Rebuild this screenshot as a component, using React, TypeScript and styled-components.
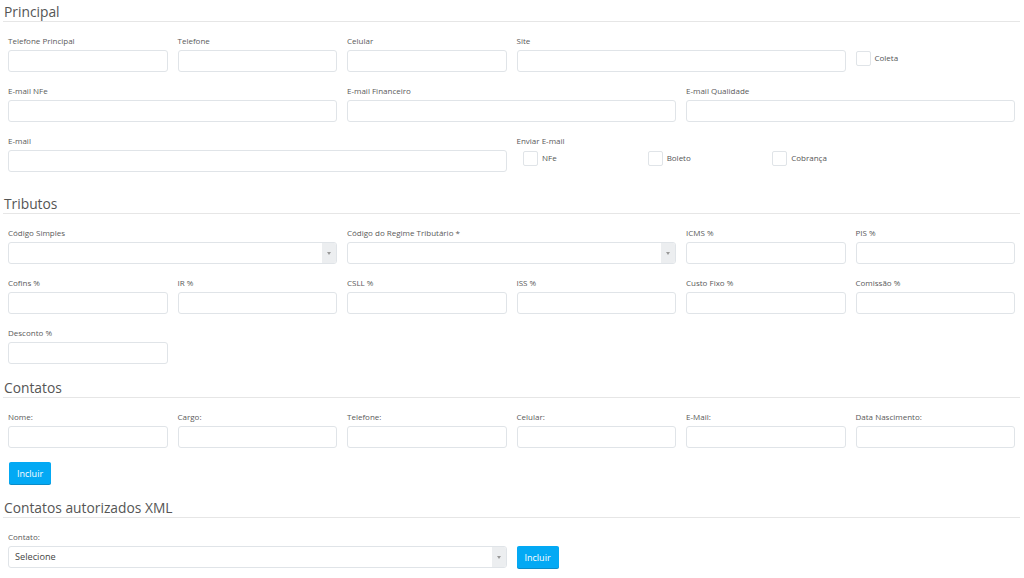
import React from 'react';
import styled, { createGlobalStyle } from 'styled-components';

const GlobalStyle = createGlobalStyle`
  html, body {
    margin: 0;
    padding: 0;
    background: #ffffff;
    font-family: "Open Sans", "Liberation Sans", sans-serif;
    color: #555;
  }
  * {
    box-sizing: border-box;
  }
`;

const Page = styled.div`
  width: 1024px;
  padding: 0 4px 0 3px;
`;

// margin-top collapses with the 10px bottom margin of the row above
const SectionTitle = styled.h3<{ $first?: boolean }>`
  margin: ${p => (p.$first ? '0' : '12px')} 0 0 0;
  padding: 0 0 0 1px;
  height: 22px;
  font-size: 13.8px;
  line-height: 23px;
  font-weight: 400;
  color: #555;
  border-bottom: 1px solid #e6e6e6;
`;

const Rows = styled.div`
  padding-top: 10px;
`;

const Row = styled.div`
  display: grid;
  grid-template-columns: repeat(6, 1fr);
  margin-bottom: 10px;
`;

const Col = styled.div<{ $span?: number }>`
  grid-column: span ${p => p.$span || 1};
  padding: 0 5px;
  min-width: 0;
`;

const Label = styled.label`
  display: block;
  height: 18px;
  font-size: 8px;
  line-height: 18px;
  color: #5a5a5a;
  white-space: nowrap;
`;

const Input = styled.input`
  display: block;
  width: 100%;
  height: 22px;
  margin: 0;
  padding: 0 6px;
  border: 1px solid #e0e4e8;
  border-radius: 3px;
  background: #fff;
  font-family: inherit;
  font-size: 9px;
  outline: none;
`;

const SelectBox = styled.div`
  display: flex;
  height: 22px;
  border: 1px solid #e0e4e8;
  border-radius: 3px;
  overflow: hidden;
  background: #fff;
`;

const SelectValue = styled.div`
  flex: 1;
  padding: 0 6px;
  font-size: 9.2px;
  line-height: 20px;
  color: #444;
`;

const SelectArrow = styled.div`
  width: 14px;
  background: #eceef0;
  display: flex;
  align-items: center;
  justify-content: center;

  &::after {
    content: '';
    width: 0;
    height: 0;
    border-left: 2.5px solid transparent;
    border-right: 2.5px solid transparent;
    border-top: 3px solid #999;
  }
`;

const CheckGroup = styled.div`
  display: grid;
  grid-template-columns: repeat(4, 1fr);
  height: 30px;
`;

const CheckItem = styled.label<{ $pad?: number }>`
  display: flex;
  align-items: center;
  gap: 3px;
  height: 16px;
  margin-top: 0;
  padding-left: ${p => p.$pad ?? 6.5}px;
  font-size: 8px;
  line-height: 12px;
  color: #555;
  white-space: nowrap;
`;

const Box = styled.span`
  display: inline-block;
  width: 15px;
  height: 15px;
  border: 1px solid #e0e4e8;
  border-radius: 2px;
  background: #fff;
  margin-right: 1px;
`;

const Button = styled.button`
  display: block;
  height: 22px;
  padding: 0 8px;
  margin: 0;
  border: none;
  border-radius: 2px;
  background: #03a9f4;
  box-shadow: 0 1px 0 #0a8cc8;
  color: #fff;
  font-family: inherit;
  font-size: 9px;
  cursor: pointer;
`;

const IncluirBlock = styled.div`
  padding: 4px 5px 0 6px;
  margin-bottom: 10px;
`;

const Select: React.FC<{ value?: string }> = ({ value }) => (
  <SelectBox>
    <SelectValue>{value}</SelectValue>
    <SelectArrow />
  </SelectBox>
);

const Field: React.FC<{ label: string; span?: number; select?: boolean; value?: string }> = ({
  label,
  span,
  select,
  value,
}) => (
  <Col $span={span}>
    <Label>{label}</Label>
    {select ? <Select value={value} /> : <Input />}
  </Col>
);

const App: React.FC = () => {
  return (
    <Page>
      <GlobalStyle />

      <SectionTitle $first>Principal</SectionTitle>
      <Rows>
        <Row>
          <Field label="Telefone Principal" />
          <Field label="Telefone" />
          <Field label="Celular" />
          <Field label="Site" span={2} />
          <Col>
            <Label />
            <CheckItem $pad={0}>
              <Box />
              Coleta
            </CheckItem>
          </Col>
        </Row>
        <Row>
          <Field label="E-mail NFe" span={2} />
          <Field label="E-mail Financeiro" span={2} />
          <Field label="E-mail Qualidade" span={2} />
        </Row>
        <Row>
          <Field label="E-mail" span={3} />
          <Col $span={3}>
            <Label>Enviar E-mail</Label>
            <CheckGroup>
              <CheckItem>
                <Box />
                NFe
              </CheckItem>
              <CheckItem>
                <Box />
                Boleto
              </CheckItem>
              <CheckItem>
                <Box />
                Cobrança
              </CheckItem>
            </CheckGroup>
          </Col>
        </Row>
      </Rows>

      <SectionTitle>Tributos</SectionTitle>
      <Rows>
        <Row>
          <Field label="Código Simples" span={2} select />
          <Field label="Código do Regime Tributário *" span={2} select />
          <Field label="ICMS %" />
          <Field label="PIS %" />
        </Row>
        <Row>
          <Field label="Cofins %" />
          <Field label="IR %" />
          <Field label="CSLL %" />
          <Field label="ISS %" />
          <Field label="Custo Fixo %" />
          <Field label="Comissão %" />
        </Row>
        <Row>
          <Field label="Desconto %" />
        </Row>
      </Rows>

      <SectionTitle>Contatos</SectionTitle>
      <Rows>
        <Row>
          <Field label="Nome:" />
          <Field label="Cargo:" />
          <Field label="Telefone:" />
          <Field label="Celular:" />
          <Field label="E-Mail:" />
          <Field label="Data Nascimento:" />
        </Row>
      </Rows>
      <IncluirBlock>
        <Button>Incluir</Button>
      </IncluirBlock>

      <SectionTitle>Contatos autorizados XML</SectionTitle>
      <Rows>
        <Row>
          <Field label="Contato:" span={3} select value="Selecione" />
          <Col>
            <Label />
            <Button>Incluir</Button>
          </Col>
        </Row>
      </Rows>
    </Page>
  );
};

export default App;
